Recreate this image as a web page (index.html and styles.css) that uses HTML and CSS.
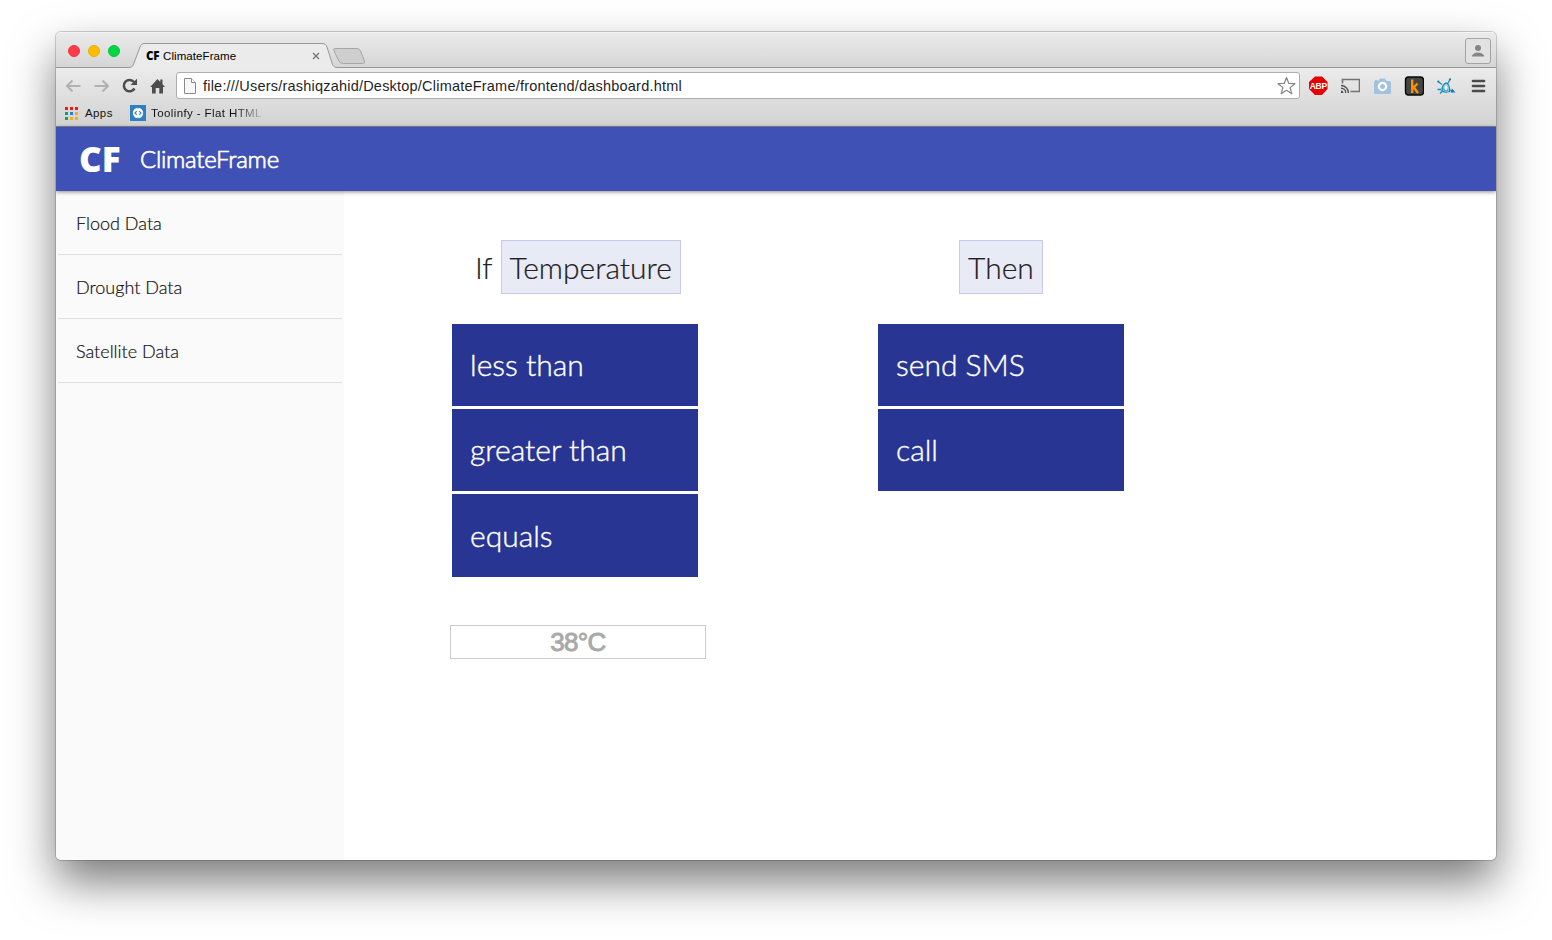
FILE: index.html
```html
<!DOCTYPE html>
<html lang="en">
<head>
<meta charset="utf-8">
<title>ClimateFrame</title>
<link rel="stylesheet" href="styles.css">
</head>
<body>
<div class="window">
  <div class="tabstrip">
    <div class="lights"><i class="red"></i><i class="yellow"></i><i class="green"></i></div>
    <div class="tab">
      <svg class="tab-shape" width="240" height="26" viewBox="0 0 240 26">
        <path d="M-2 24.500 C1 24.500 2 23 3 20 L9 4 C10 1.500 11 .5 14 .5 H191 C194 .5 195 1.500 196 4 L201 20 C202 23 203 24.500 207 24.500 V26 H-2Z" fill="#ebebeb"/>
        <path d="M-2 24.500 C1 24.500 2 23 3 20 L9 4 C10 1.500 11 .5 14 .5 H191 C194 .5 195 1.500 196 4 L201 20 C202 23 203 24.500 207 24.500" fill="none" stroke="#989898"/>
        <path d="M204 5.500 H226 Q228.500 5.500 229.500 8 L233.500 18 Q234.500 20.500 231.500 20.500 H212.500 Q209 20.500 208 18 L203 8 Q202 5.500 204 5.500Z" fill="#cfcfcf" stroke="#a6a6a6"/>
      </svg>
      <div class="tab-label"><b>CF</b><span>ClimateFrame</span>
        <svg class="tab-close" width="8" height="8" viewBox="0 0 8 8"><path d="M1 1l6 6M7 1l-6 6" stroke="#777" stroke-width="1.400"/></svg>
      </div>
    </div>
    <div class="profile"><svg width="14" height="14" viewBox="0 0 14 14"><circle cx="7" cy="4" r="3" fill="#858585"/><path d="M1 12.500V11.500Q3 8.500 7 8.500T13 11.500V12.500Z" fill="#858585"/></svg></div>
  </div>
  <div class="chrome">
    <div class="toolbar">
      <svg class="nav" width="116" height="20" viewBox="0 0 116 20">
        <g fill="none" stroke="#b1b1b1" stroke-width="2"><path d="M18.500 10H5M10.500 4.500L5 10l5.500 5.500"/><path d="M32.500 10H46M40.500 4.500L46 10l-5.500 5.500"/></g>
        <path d="M72 6A5.700 5.700 0 1 0 72.500 12.500" fill="none" stroke="#4d4d4d" stroke-width="2.500"/>
        <path d="M75 2.800V9H68.500Z" fill="#4d4d4d"/>
        <path d="M88.200 11L95.500 3 98.300 6V3.500H100.500V8.300L103 11H101V17.500H97.300V12H93.700V17.500H90V11Z" fill="#4d4d4d"/>
      </svg>
      <div class="address">
        <svg width="12" height="16" viewBox="0 0 12 16"><path d="M.5 .5H7.500L11.500 4.500V15.500H.5Z" fill="#f7f7f7" stroke="#8b8b8b"/><path d="M7.500 .5V4.500H11.500" fill="#fff" stroke="#8b8b8b"/></svg>
        <span class="url">file:///Users/rashiqzahid/Desktop/ClimateFrame/frontend/dashboard.html</span>
        <svg width="20" height="20" viewBox="0 0 20 20"><path d="M10.500 1.500L12.800 7.500 18.900 7.700 14.100 11.600 15.800 17.700 10.500 14.300 5.200 17.700 6.900 11.600 2.100 7.700 8.200 7.500Z" fill="#fff" stroke="#858585" stroke-width="1.200" stroke-linejoin="round"/></svg>
      </div>
      <div class="extensions">
        <svg class="blocker" width="20" height="20" viewBox="0 0 20 20"><path d="M7 .5h7l5.500 5.500v7l-5.500 6h-7l-6-6v-7z" fill="#e60000"/><text class="abp" x="10.300" y="13.100" text-anchor="middle">ABP</text></svg>
        <svg width="20" height="20" viewBox="0 0 20 20"><path d="M2.500 7.500V3.500H19.500V15.500H10.500" fill="none" stroke="#737373" stroke-width="1.600"/><path d="M1 9.500A7.500 7.500 0 0 1 8.500 17M1 12.200A4.800 4.800 0 0 1 5.800 17" fill="none" stroke="#555" stroke-width="1.400"/><path d="M1 14.500A2.500 2.500 0 0 1 3.500 17H1Z" fill="#555"/></svg>
        <svg width="20" height="20" viewBox="0 0 20 20"><path d="M3 5V4H5.500V5H6.500L8 2.500H13L14.500 5H17.500Q19 5 19 6.500V16.500Q19 18 17.500 18H3.500Q2 18 2 16.500V6.500Q2 5 3 5Z" fill="#a2c2df"/><circle cx="10.500" cy="10.500" r="3.600" fill="#a2c2df" stroke="#fff" stroke-width="2.200"/></svg>
        <svg width="20" height="20" viewBox="0 0 20 20"><rect x="1.500" y="1" width="18" height="18" rx="3" fill="#444" stroke="#080808" stroke-width="1.400"/><path d="M8.200 3.500V17M9 12.200L13.500 7.500M9.500 11L14 17" fill="none" stroke="#ff9400" stroke-width="2.300"/></svg>
        <svg width="20" height="20" viewBox="0 0 20 20"><path d="M6 15Q6 8 10.500 7Q14 9 13.500 15.500Q9 17 6 15M11.800 7.500L14 3.500M2 5.500L6 8.500M1.500 13.500H5M4 17.500L6 15.500M13 13.500L18 15.500" fill="none" stroke="#168db5" stroke-width="1.300"/><path d="M7 14Q7 10 10 8.500Q13 10 12.500 15H8Z" fill="#38b7da"/><ellipse cx="10" cy="11.700" rx="1.600" ry="2.400" fill="#fff"/><circle cx="14" cy="3.300" r="1.100" fill="#167ba2"/><circle cx="2.300" cy="5.500" r="1.100" fill="#167ba2"/><path d="M16 12.500L19.500 16.500H14.500Z" fill="#167ba2"/></svg>
        <svg width="20" height="20" viewBox="0 0 20 20"><path d="M5 5H16M5 10H16M5 15H16" stroke="#4b4b4b" stroke-width="2.700" stroke-linecap="round"/></svg>
      </div>
    </div>
    <div class="bookmarks">
      <svg width="13" height="13" viewBox="0 0 13 13"><path d="M0 0h3v3H0zM5 0h3v3H5zM10 0h3v3h-3z" fill="#f01818"/><path d="M0 5h3v3H0zM0 10h3v3H0z" fill="#16a05a"/><path d="M5 5h3v3H5z" fill="#1683f4"/><path d="M10 5h3v3h-3zM5 10h3v3H5zM10 10h3v3h-3z" fill="#f3ac1b"/></svg>
      <span class="apps">Apps</span>
      <svg width="16" height="16" viewBox="0 0 16 16"><rect width="16" height="16" fill="#2f7fc3"/><circle cx="8" cy="8" r="5.200" fill="#fff"/><path d="M6.700 6.200L5 8L6.700 9.800M9.300 6.200L11 8L9.300 9.800" fill="none" stroke="#2f7fc3" stroke-width="1.100"/><path d="M8 2.200V3.500M8 12.500V13.800M2.500 8H3.200M12.800 8H13.500" stroke="#2f7fc3"/></svg>
      <span class="bookmark">Toolinfy - Flat HTML</span>
    </div>
  </div>
  <header class="appbar"><span class="logo">CF</span><span class="brand">ClimateFrame</span></header>
  <div class="page">
    <nav class="sidebar">
      <a class="side-item">Flood Data</a>
      <a class="side-item">Drought Data</a>
      <a class="side-item">Satellite Data</a>
    </nav>
    <main class="rules">
      <section class="column condition-column">
        <div class="condition"><span>If</span><span class="chip">Temperature</span></div>
        <ul class="options"><li>less than</li><li>greater than</li><li>equals</li></ul>
        <div class="value">38°C</div>
      </section>
      <section class="column action-column">
        <div class="condition"><span class="chip">Then</span></div>
        <ul class="options"><li>send SMS</li><li>call</li></ul>
      </section>
    </main>
  </div>
</div>
</body>
</html>
```
FILE: styles.css
```css
* { box-sizing: border-box; }
body { margin: 0; height: 940px; padding: 32px 56px 80px; background: #fff; overflow: hidden; font-family: "Liberation Sans", Arial, sans-serif; }
svg { display: block; flex: none; }
.window { height: 828px; display: flex; flex-direction: column; border-radius: 5px; overflow: hidden; background: #fff; box-shadow: 0 0 0 1px rgba(0,0,0,.18), 0 22px 45px rgba(0,0,0,.52); }
.tabstrip { height: 36px; flex: none; display: flex; background: linear-gradient(#ebebeb, #d5d5d5); box-shadow: inset 0 -1px #999, inset 0 1px #f4f4f4; }
.lights { display: flex; gap: 8px; padding: 13px 0 0 12px; width: 75px; }
.lights i { width: 12px; height: 12px; border-radius: 50%; }
.red { background: #fc3d48; border: 1px solid #ec3540; }
.yellow { background: #ffbd00; border: 1px solid #eeae00; }
.green { background: #00d742; border: 1px solid #00c53b; }
.tab { display: grid; margin-top: 11px; height: 25px; }
.tab-shape, .tab-label { grid-area: 1 / 1; }
.tab-shape, .blocker { overflow: visible; }
.tab-label { display: flex; align-items: center; height: 25px; padding-left: 15px; font-size: 11.500px; color: #000; letter-spacing: .08px; }
.tab-label b { font: 800 11.500px "Open Sans", sans-serif; letter-spacing: -.3px; width: 17px; }
.tab-label span { width: 149px; }
.profile { margin: 6px 5px 0 auto; width: 26px; height: 26px; border: 1px solid #a4a4a4; border-radius: 3px; display: grid; place-items: center; background: #e2e2e2; }
.chrome { height: 59px; flex: none; background: linear-gradient(#ebebeb, #d2d2d2); border-bottom: 1px solid #858585; }
.toolbar { display: flex; padding: 4px 8px 0 6px; height: 32px; align-items: flex-start; }
.nav { margin: 4px 0 0; }
.address { display: flex; align-items: center; width: 1124px; height: 27px; margin-left: -2px; padding: 0 3px 0 7px; background: #fff; border: 1px solid #adadad; border-radius: 3px; }
.url { flex: 1; margin-left: 7px; font-size: 14.500px; letter-spacing: .21px; color: #1f1f1f; white-space: nowrap; }
.extensions { display: flex; gap: 12px; margin: 4px 0 0 8px; }
.abp { font: bold 8.500px "Liberation Sans", sans-serif; letter-spacing: -.3px; fill: #fff; }
.bookmarks { display: flex; align-items: center; height: 26px; padding-left: 9px; font-size: 11.500px; letter-spacing: .4px; color: #111; }
.apps { width: 45px; margin-left: 7px; }
.bookmark { margin-left: 5px; background: linear-gradient(90deg, #111 75%, #bbb); background-clip: text; color: transparent; }
.appbar { height: 64px; flex: none; display: flex; align-items: center; padding: 0 0 0 23px; background: #3f51b5; color: #fff; box-shadow: 0 1px 4px rgba(0,0,0,.45); z-index: 1; }
.logo { width: 61px; font: 800 35px/64px "Open Sans", sans-serif; }
.brand { font: 300 24px/64px Lato, sans-serif; letter-spacing: -.27px; -webkit-text-stroke: .7px #fff; }
.page { flex: 1; display: flex; min-height: 0; }
.sidebar { width: 288px; padding: 0 2px; background: #fafafa; }
.side-item { display: block; height: 64px; padding-left: 18px; border-bottom: 1px solid #e0e0e0; font: 300 18px/65px Lato, sans-serif; color: #111; -webkit-text-stroke: .2px #111; }
.rules { display: flex; gap: 170px; padding: 49px 0 0 106px; font: 300 30px/50px Lato, sans-serif; color: #212121; }
.column { width: 256px; }
.action-column { width: 250px; }
.condition { display: flex; justify-content: center; gap: 8px; height: 54px; line-height: 54px; -webkit-text-stroke: .2px #212121; }
.chip { height: 54px; padding: 0 8px; background: #e8eaf6; border: 1px solid #c5cae9; line-height: 52px; }
.options { list-style: none; margin: 30px 0 0 2px; padding: 0; display: grid; gap: 3px; width: 246px; }
.options li { height: 82px; padding-left: 18px; line-height: 80px; background: #283593; color: #fff; -webkit-text-stroke: .4px #fff; }
.options li:nth-child(3) { height: 83px; line-height: 82px; }
.value { width: 256px; height: 34px; margin-top: 48px; border: 1px solid #ccc; text-align: center; font: 26px/33px "Liberation Sans", sans-serif; letter-spacing: -.7px; color: #a9a9a9; -webkit-text-stroke: .9px #a9a9a9; }
```
